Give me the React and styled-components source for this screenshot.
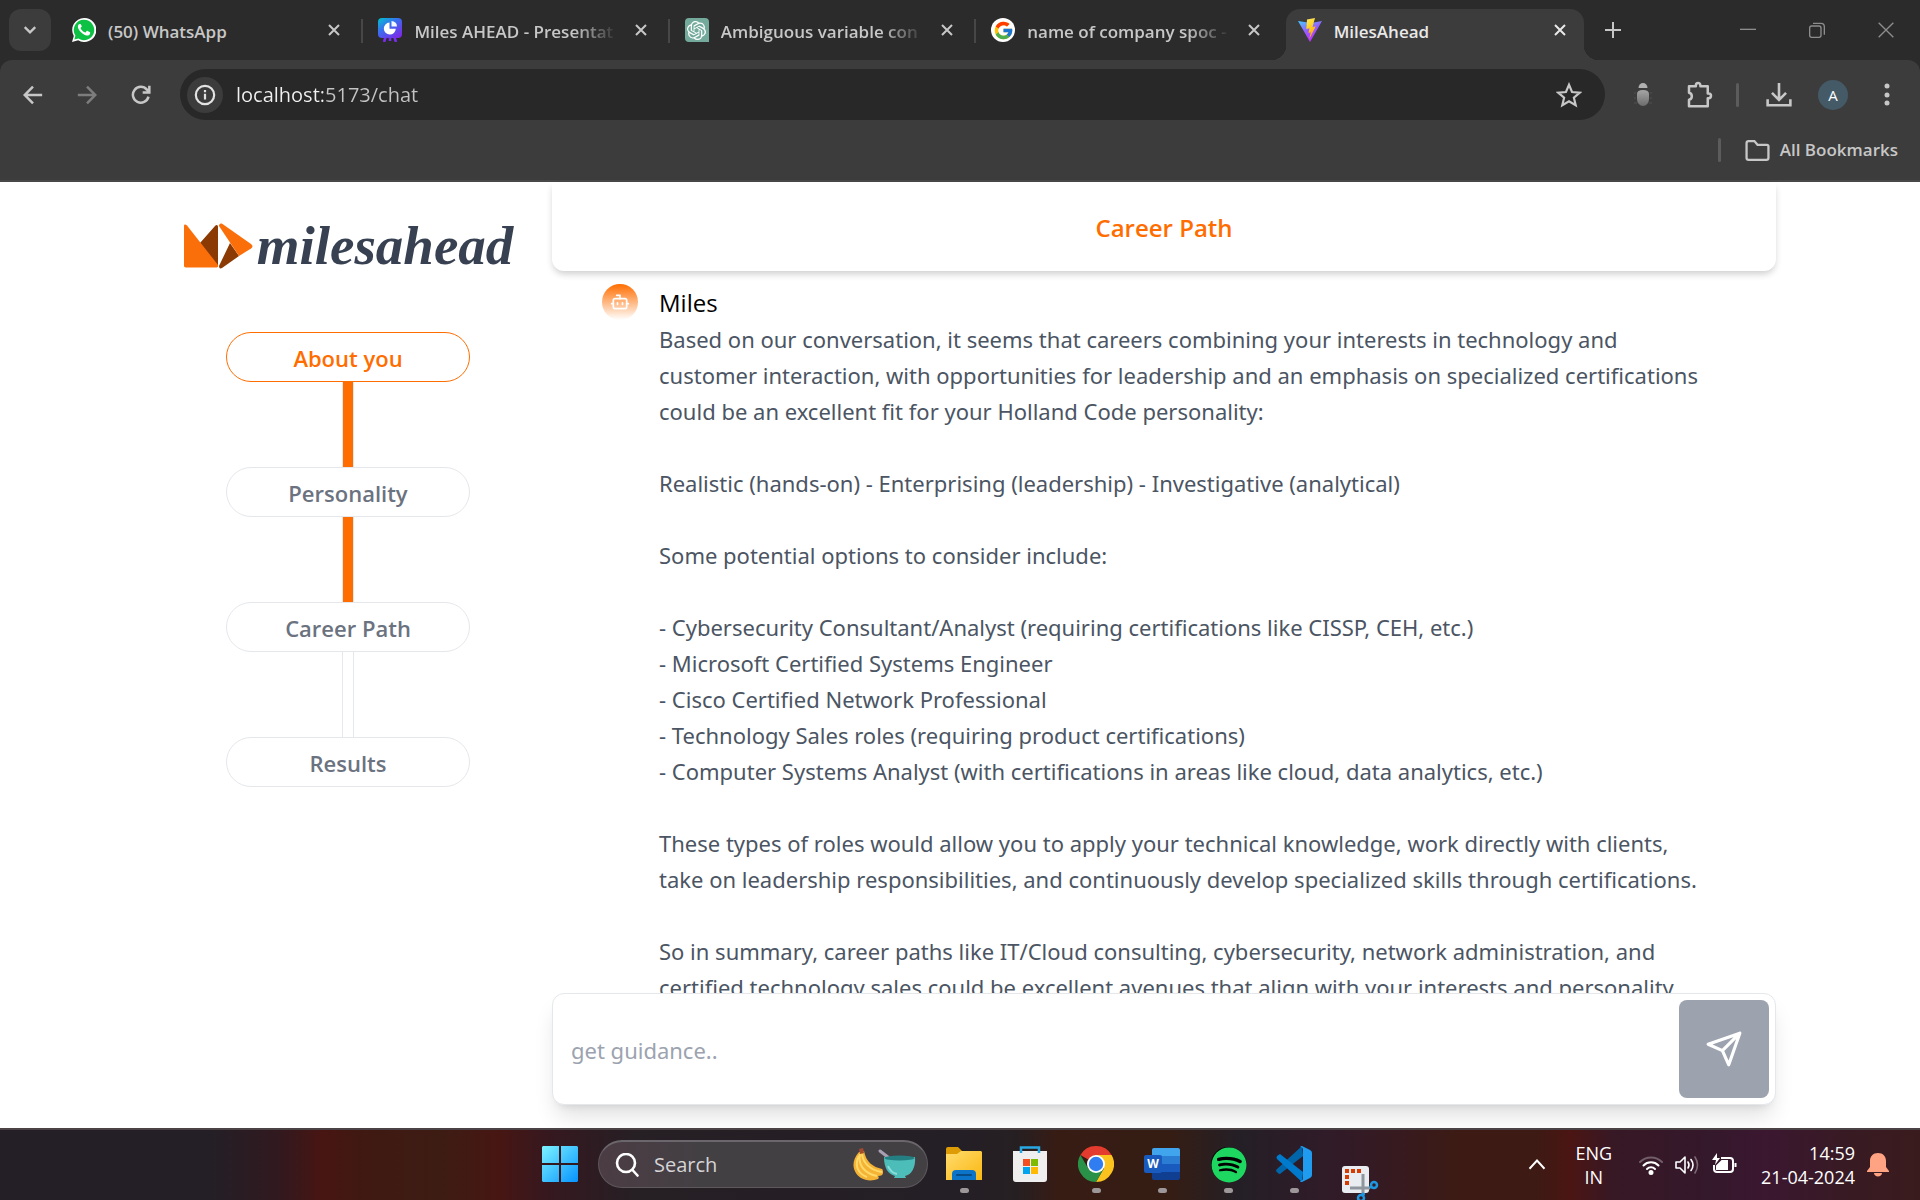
import React, { useState } from "react";
import styled, { createGlobalStyle, css } from "styled-components";
import { FcGoogle } from "react-icons/fc";
import { SiOpenai } from "react-icons/si";
import { FaSpotify } from "react-icons/fa";

const UI = `"Open Sans", "Noto Sans", sans-serif`;
const TEXT = `"Noto Sans", "Open Sans", sans-serif`;
const ORANGE = "#ff6d00";

const GlobalStyle = createGlobalStyle`
  * { box-sizing: border-box; }
  body { margin: 0; background: #fff; font-family: ${UI}; }
  button, input { font-family: inherit; }
  button { border: 0; padding: 0; background: none; color: inherit; cursor: pointer; }
  input { border: 0; outline: 0; background: none; min-width: 0; }
  svg { display: block; flex: none; }
`;

const Screen = styled.div`
  display: flex;
  flex-direction: column;
  height: 100vh;
  overflow: hidden;
`;

/* ---------- browser frame ---------- */

const BrowserFrame = styled.header`
  flex: none;
  background: #2b2b2b;
  color: #c7c7c7;
`;

const TabStrip = styled.div`
  display: flex;
  align-items: center;
  height: 60px;
  padding: 0 0 0 9px;
`;

const TabSearch = styled.button`
  display: grid;
  place-items: center;
  width: 42px;
  height: 42px;
  border-radius: 12px;
  background: #3c3c3c;
`;

const Tabs = styled.div`
  display: flex;
  align-self: stretch;
  flex: 0 1 1530px;
  min-width: 0;
  margin-left: 9px;
`;

const Tab = styled.div`
  position: relative;
  display: flex;
  align-items: center;
  flex: 1 1 0;
  min-width: 0;
  gap: 12px;
  padding: 0 20px 0 12px;

  ${(p) =>
    p.$divided &&
    css`
      &::after {
        content: "";
        position: absolute;
        right: 3px;
        top: 19px;
        width: 2px;
        height: 24px;
        background: #474747;
      }
    `}

  ${(p) =>
    p.$active &&
    css`
      margin: 9px 6px 0 0;
      padding: 0 12px 9px 12px;
      background: #3c3c3c;
      border-radius: 14px 14px 0 0;
      color: #e9e9e9;

      &::before,
      &::after {
        content: "";
        position: absolute;
        bottom: 0;
        width: 14px;
        height: 14px;
      }
      &::before {
        left: -14px;
        background: radial-gradient(circle at 0 0, transparent 14px, #3c3c3c 14px);
      }
      &::after {
        right: -14px;
        background: radial-gradient(circle at 100% 0, transparent 14px, #3c3c3c 14px);
      }
    `}
`;

const TabTitle = styled.span`
  flex: 1;
  min-width: 0;
  padding-top: 3px;
  white-space: nowrap;
  font-size: 17px;
  line-height: 24px;
  font-weight: 600;
  ${(p) => p.$fade && css`mask-image: linear-gradient(to right, #000 160px, transparent 204px);`}
`;

const IconButton = styled.button`
  display: grid;
  place-items: center;
  flex: none;
  width: ${(p) => p.$w || 36}px;
  height: 36px;
  color: ${(p) => p.$color || "inherit"};
`;

const WindowButtons = styled.div`
  display: flex;
  margin-left: auto;
  color: #8d8d8d;
`;

const Toolbar = styled.div`
  display: flex;
  align-items: center;
  height: 69px;
  padding: 0 11px 0 6px;
  background: #3c3c3c;
  border-radius: 12px 12px 0 0;
`;

const NavButtons = styled.div`
  display: flex;
  flex: none;
  width: 174px;
`;

const AddressBar = styled.div`
  display: flex;
  align-items: center;
  flex: 1;
  height: 51px;
  padding: 0 18px 0 7px;
  border-radius: 26px;
  background: #282828;
`;

const SiteInfo = styled.button`
  display: grid;
  place-items: center;
  width: 36px;
  height: 36px;
  border-radius: 50%;
  background: #3c3c3c;
  color: #e3e3e3;
`;

const AddressInput = styled.input`
  flex: 1;
  margin-left: 13px;
  padding: 0;
  font-size: 20px;
  line-height: 28px;
  color: transparent;
  background: linear-gradient(to right, #f1f1f1 87px, #c4c4c4 87px);
  background-clip: text;
`;

const ToolbarActions = styled.div`
  display: flex;
  align-items: center;
  flex: none;
`;

const Divider = styled.span`
  width: 3px;
  height: 24px;
  border-radius: 2px;
  background: #5c5c5c;
`;

const Profile = styled.button`
  width: 30px;
  height: 30px;
  border-radius: 50%;
  background: #455a67;
  color: #fff;
  font-size: 15px;
  line-height: 30px;
`;

const Bookmarks = styled.div`
  display: flex;
  align-items: center;
  justify-content: flex-end;
  gap: 24px;
  height: 53px;
  padding: 0 22px 9px 0;
  background: #3c3c3c;
  border-bottom: 2px solid #484848;
`;

const BookmarkButton = styled.button`
  display: flex;
  align-items: center;
  gap: 10px;
  font-size: 17px;
  line-height: 24px;
  font-weight: 600;
`;

/* ---------- page ---------- */

const Page = styled.main`
  display: grid;
  grid-template-columns: 1fr 3fr;
  flex: 1;
  min-height: 0;
  width: 85%;
  margin: 0 auto;
`;

const Sidebar = styled.aside`
  display: flex;
  flex-direction: column;
  align-items: center;
  padding-top: 40px;
`;

const Brand = styled.h1`
  display: flex;
  align-items: center;
  gap: 4px;
  height: 48px;
  margin: 0 0 62px;
  font-family: "Liberation Serif", "Times New Roman", serif;
  font-size: 55px;
  line-height: 48px;
  font-style: italic;
  font-weight: 700;
  color: #374151;
`;

const Steps = styled.ol`
  display: flex;
  flex-direction: column;
  margin: 0;
  padding: 0;
  list-style: none;
`;

const Step = styled.li`
  display: flex;
  flex-direction: column;
  align-items: center;
`;

const StepButton = styled.button`
  width: 244px;
  height: 50px;
  padding-top: 2px;
  border: 1px solid ${(p) => (p.$current ? ORANGE : "#e5e7eb")};
  border-radius: 25px;
  color: ${(p) => (p.$current ? ORANGE : "#6b7280")};
  background: #fff;
  font-size: 22px;
  line-height: 36px;
  font-weight: 600;
`;

const Connector = styled.span`
  width: 12px;
  height: 85px;
  border: solid #e5e7eb;
  border-width: 0 1px;
  background: ${(p) => (p.$done ? ORANGE : "#fff")};
`;

const Chat = styled.section`
  display: flex;
  flex-direction: column;
  min-width: 0;
  min-height: 0;
  padding-bottom: 23px;
`;

const ChatHeader = styled.h2`
  position: relative;
  z-index: 1;
  flex: none;
  margin: 0;
  padding: 28px 0 25px;
  border-radius: 0 0 12px 12px;
  background: #fff;
  box-shadow: 0 4px 6px -1px rgba(0, 0, 0, 0.1), 0 4px 10px -2px rgba(0, 0, 0, 0.12);
  color: ${ORANGE};
  text-align: center;
  font-size: 24px;
  line-height: 36px;
  font-weight: 600;
`;

const Messages = styled.div`
  flex: 1;
  min-height: 0;
  overflow: hidden;
  padding: 13px 50px 0;
`;

const Message = styled.article`
  display: flex;
  gap: 21px;
`;

const Avatar = styled.span`
  display: grid;
  place-items: center;
  flex: none;
  width: 36px;
  height: 36px;
  border-radius: 50%;
  background: linear-gradient(${ORANGE}, #fff);
  color: #fff;
`;

const MessageBody = styled.div`
  min-width: 0;
  padding-top: 1px;
  color: #4b5563;
  font-family: ${TEXT};
  font-size: 22px;
  line-height: 36px;
`;

const Author = styled.h3`
  margin: 0;
  font-family: ${UI};
  font-size: 24px;
  line-height: 36px;
  font-weight: 500;
  color: #000;
`;

const MessageText = styled.p`
  margin: 0 0 36px;
  white-space: pre;
`;

const Composer = styled.form`
  display: flex;
  flex: none;
  height: 112px;
  padding: 6px;
  border: 1px solid #e5e7eb;
  border-radius: 12px;
  background: #fff;
  box-shadow: 0 15px 22px -4px rgba(0, 0, 0, 0.12), 0 6px 9px -6px rgba(0, 0, 0, 0.12);
`;

const Prompt = styled.input`
  flex: 1;
  padding: 2px 12px 0;
  font-family: ${TEXT};
  font-size: 22px;
  line-height: 36px;
  color: #374151;
  &::placeholder {
    color: #9ca3af;
    opacity: 1;
  }
`;

const SendButton = styled.button`
  display: grid;
  place-items: center;
  width: 90px;
  border-radius: 8px;
  background: #9ca3af;
  color: #fff;
`;

/* ---------- taskbar ---------- */

const Taskbar = styled.footer`
  display: grid;
  grid-template-columns: 1fr auto 1fr;
  flex: none;
  height: 72px;
  border-top: 2px solid #4b4245;
  color: #fff;
  background: linear-gradient(
    to right,
    #241f26 0%, #241f26 11%, #31191f 14.5%, #481512 16.8%, #3f1912 19%, #3d1c14 23%,
    #471613 26%, #36181f 28.5%, #261f24 33%, #241f26 50%, #261f22 53%, #371c14 55%,
    #351d14 61%, #241f26 64.5%, #301b29 69%, #371a1f 73%, #3d1b14 76%, #3d1a14 80%,
    #4b1513 81.8%, #371825 84%, #34182b 89%, #3b1730 92%, #381a24 96%, #3a1b1d 100%
  );
`;

const TaskbarApps = styled.nav`
  grid-column: 2;
  display: flex;
  align-items: center;
`;

const AppButton = styled.button`
  position: relative;
  display: grid;
  place-items: center;
  width: 66px;
  height: 70px;
  padding-bottom: 2px;
  ${(p) =>
    p.$running &&
    css`
      &::after {
        content: "";
        position: absolute;
        left: 29px;
        bottom: 7px;
        width: 9px;
        height: 5px;
        border-radius: 3px;
        background: #9d9799;
      }
    `}
`;

const SnipSlot = styled(AppButton)`
  align-items: end;
  padding-bottom: 0;
`;

const TaskSearch = styled.label`
  display: flex;
  align-items: center;
  width: 330px;
  height: 48px;
  margin: 0 3px 2px 5px;
  padding: 0 11px 0 16px;
  border: 1px solid #5d585c;
  border-top: 2px solid #6b666b;
  border-radius: 24px;
  background: linear-gradient(to right, #4c3c44, #434044 30%);
`;

const TaskSearchInput = styled.input`
  flex: 1;
  width: 100px;
  padding: 0 0 0 15px;
  font-size: 20px;
  line-height: 28px;
  color: #fff;
  &::placeholder {
    color: #d6d4d6;
    opacity: 1;
  }
`;

const Tray = styled.div`
  grid-column: 3;
  display: flex;
  align-items: center;
  justify-content: flex-end;
  padding-right: 31px;
`;

const HiddenIcons = styled(IconButton)`
  margin-right: 20px;
`;

const TrayText = styled.button`
  margin-right: ${(p) => p.$gap}px;
  padding-bottom: 1px;
  text-align: ${(p) => p.$align};
  font-size: 18px;
  line-height: 24px;
`;

const TrayIcons = styled.div`
  display: flex;
  align-items: center;
  gap: 12px;
  margin-right: 24px;
`;

/* ---------- icons ---------- */

const Stroke = ({ size = 24, w = 2, children, ...rest }) => (
  <svg width={size} height={size} viewBox="0 0 24 24" fill="none" stroke="currentColor" strokeWidth={w} aria-hidden="true" {...rest}>
    {children}
  </svg>
);

const CloseIcon = () => (
  <Stroke size={12} w={4}><path d="M2 2l20 20M22 2L2 22" /></Stroke>
);

const WhatsAppLogo = () => (
  <svg width="24" height="24" viewBox="0 0 24 24" aria-hidden="true">
    <path d="M12 0a12 12 0 0 0-10.200 18L0 24l6.200-1.700A12 12 0 1 0 12 0z" fill="#fff" />
    <path d="M12 1.800A10.200 10.200 0 0 0 3.400 17.500L2.400 21.500l4-1A10.200 10.200 0 1 0 12 1.800z" fill="#0cc143" />
    <path d="M8.900 6.500c-.3-.6-.6-.6-1-.6-1.200 0-2 1.300-2 2.600 0 3.600 5.400 9 9 9 1.800 0 3.300-1 3.300-2.600 0-.6-.1-.8-.6-1l-2-1c-.5-.2-.8-.1-1.100.3l-.8 1c-.3.3-.6.300-1 .1-1.600-.7-3.200-2.200-4-3.800-.2-.4-.1-.6.1-.9l.8-.9c.2-.3.200-.5.100-.8z" fill="#fff" />
  </svg>
);

const SlidesLogo = () => (
  <svg width="24" height="24" viewBox="0 0 24 24" aria-hidden="true">
    <defs>
      <linearGradient id="slides" x1="0" y1="0" x2="0.8" y2="1">
        <stop offset="0" stopColor="#00c4cc" />
        <stop offset="0.45" stopColor="#3a6df0" />
        <stop offset="1" stopColor="#7d2ae8" />
      </linearGradient>
    </defs>
    <path d="M8 18l-2 6M16 18l2 6M12 19v4" stroke="#7a2df0" strokeWidth="2.600" />
    <rect width="24" height="20" rx="4" fill="url(#slides)" />
    <path d="M11.500 4.500v6.300h6.300a6 6 0 1 1-6.300-6.300z" fill="#fff" />
    <path d="M13.500 3a5.500 5.500 0 0 1 5.500 5.500h-5.500z" fill="#fff" opacity="0.950" />
  </svg>
);

const ChatGptBadge = styled.span`
  display: grid;
  place-items: center;
  flex: none;
  width: 24px;
  height: 24px;
  border-radius: 4px 4px 0 4px;
  background: #74aa9c;
  color: #fff;
`;

const GoogleBadge = styled(ChatGptBadge)`
  border-radius: 50%;
  background: #fff;
`;

const ViteLogo = () => (
  <svg width="24" height="24" viewBox="0 0 24 24" aria-hidden="true">
    <defs>
      <linearGradient id="vite" x1="0" y1="0" x2="0.500" y2="1">
        <stop offset="0" stopColor="#41d1ff" />
        <stop offset="0.500" stopColor="#9461fd" />
        <stop offset="1" stopColor="#c02fff" />
      </linearGradient>
      <linearGradient id="bolt" x1="0" y1="0" x2="0.300" y2="1">
        <stop offset="0" stopColor="#ffea83" />
        <stop offset="0.300" stopColor="#ffdd35" />
        <stop offset="1" stopColor="#ffa800" />
      </linearGradient>
    </defs>
    <path d="M0 3l12 21L24 3l-11 2z" fill="url(#vite)" />
    <path d="M17 0L9 1.500 8.300 11l3.200-.7-1 4.700 2.300-.7-1.500 6.700L17.700 8.500l-3.200.6z" fill="url(#bolt)" />
  </svg>
);

const BugIcon = () => (
  <svg width="22" height="26" viewBox="0 0 22 26" aria-hidden="true">
    <defs>
      <linearGradient id="bug" x1="0" y1="0" x2="0" y2="1">
        <stop offset="0" stopColor="#a5a5a5" /><stop offset="1" stopColor="#6c6c6c" />
      </linearGradient>
    </defs>
    <path d="M6.500 6a4.500 5 0 0 1 9 0z" fill="#b0b0b0" />
    <path d="M5 12q0-4 6-4t6 4v5a6 7 0 0 1-12 0z" fill="url(#bug)" />
    <path d="M2 11h2M18 11h2M2 16h2M18 16h2M2 21h3M17 21h3" stroke="#505050" strokeWidth="1" />
  </svg>
);

const PuzzleIcon = () => (
  <Stroke size={30} w={2}>
    <path d="M4 5h5.500V4.200a1.800 1.800 0 0 1 3.600 0V5H19v5.700h.7a1.900 1.900 0 0 1 0 3.800H19V21H4v-5.200c3-.5 3-5 0-5.600z" strokeLinejoin="round" />
  </Stroke>
);

const BrandMark = () => (
  <svg width="70" height="46" viewBox="0 0 70 46" aria-hidden="true">
    <path d="M32 3c1.500-2 3-1 3 1v40L17 20z" fill="#8b3a03" />
    <path d="M1 3c0-2 1.500-2 3-.500L35 42c.5 1.500 0 2.500-1.500 2.500H3c-1.500 0-2-.7-2-2z" fill="#fb6f0b" />
    <path d="M47 20l9 13-17 12c-2 1-3 0-3-2z" fill="#8b3a03" />
    <path d="M36 3c0-2 1.500-3 3.500-2L68 21c2 1.500 2 3 0 4.500L56 33z" fill="#fb6f0b" />
  </svg>
);

const WindowsLogo = () => (
  <svg width="36" height="36" viewBox="0 0 36 36" aria-hidden="true">
    <defs>
      <linearGradient id="win" x1="0" y1="0" x2="1" y2="1">
        <stop offset="0" stopColor="#7df3ff" /><stop offset="1" stopColor="#0693ff" />
      </linearGradient>
    </defs>
    <path d="M1 0h16v17H0V1zM19 0h16l1 1v16H19zM0 19h17v17H1l-1-1zM19 19h17v16l-1 1H19z" fill="url(#win)" />
  </svg>
);

const BananaBowl = () => (
  <svg width="64" height="34" viewBox="0 0 64 34" aria-hidden="true">
    <path d="M7 4C-2 14 1 25 9 30c5 3 12 3 17 1 1-1 1-2 0-3 3 0 5-1 5-3s0-3-1-4C21 19 14 14 12 3z" fill="#f5b335" />
    <path d="M8 6c-2 10 3 19 17 22M10 6c1 9 8 16 20 18M7 8C2 17 6 26 15 29" fill="none" stroke="#ffd968" strokeWidth="2" />
    <path d="M7 1l4-1 1 5-4 1z" fill="#a54a2d" />
    <path d="M28 3l13 10" stroke="#a9a0b5" strokeWidth="3" strokeLinecap="round" />
    <path d="M32 9h31c1 11-4 18-10 19l1 2H42l1-2c-7-2-11-8-11-19z" fill="#4dbdba" />
    <ellipse cx="47.500" cy="10" rx="15" ry="2.500" fill="#237f82" />
    <path d="M36 18c2 5 5 7 9 8" fill="none" stroke="#8ce0dc" strokeWidth="2" />
  </svg>
);

const FolderLogo = () => (
  <svg width="36" height="34" viewBox="0 0 36 34" aria-hidden="true">
    <defs>
      <linearGradient id="folder" x1="0" y1="0" x2="1" y2="1">
        <stop offset="0" stopColor="#ffdc6e" /><stop offset="1" stopColor="#fbb711" />
      </linearGradient>
    </defs>
    <path d="M0 2a2 2 0 0 1 2-2h10l4 4v4H0z" fill="#dd9c06" />
    <path d="M0 7h11l4-3h20l1 1v28H0z" fill="url(#folder)" />
    <path d="M6 33v-6a4 4 0 0 1 4-4h16a4 4 0 0 1 4 4v6z" fill="#0b74c8" />
    <path d="M11 28h14" stroke="#084c87" strokeWidth="2" strokeLinecap="round" />
  </svg>
);

const StoreLogo = () => (
  <svg width="36" height="36" viewBox="0 0 36 36" aria-hidden="true">
    <path d="M1 5h34v28q0 3-3 3H4q-3 0-3-3z" fill="#efefef" />
    <path d="M9 7V1.500h18V7" fill="none" stroke="#29a9e4" strokeWidth="2.500" />
    <path d="M11 13h7v7h-7z" fill="#f25022" /><path d="M19 13h7v7h-7z" fill="#7fba00" />
    <path d="M11 21h7v7h-7z" fill="#00a4ef" /><path d="M19 21h7v7h-7z" fill="#ffb900" />
  </svg>
);

const ChromeLogo = () => (
  <svg width="36" height="36" viewBox="0 0 36 36" aria-hidden="true">
    <path d="M18 18L2.410 9A18 18 0 0 1 33.590 9z" fill="#e33b2e" />
    <path d="M18 9h15.590A18 18 0 0 1 18 36l7.790-13.500z" fill="#fcc31e" />
    <path d="M2.410 9A18 18 0 0 0 18 36l7.790-13.500L18 24l-7.790-1.500z" fill="#2a9148" />
    <circle cx="18" cy="18" r="9" fill="#fff" />
    <circle cx="18" cy="18" r="7.200" fill="#2f7df0" />
  </svg>
);

const WordLogo = () => (
  <svg width="36" height="32" viewBox="0 0 36 32" aria-hidden="true">
    <path d="M10 0h24q2 0 2 2v6H8V2q0-2 2-2z" fill="#41a5ee" />
    <path d="M8 8h28v8H8z" fill="#2b7cd3" />
    <path d="M8 16h28v8H8z" fill="#185abd" />
    <path d="M8 24h28v6q0 2-2 2H10q-2 0-2-2z" fill="#103f91" />
    <rect y="7" width="18" height="18" rx="2" fill="#185abd" />
    <text x="9" y="20" textAnchor="middle" fill="#fff" fontFamily="Open Sans, sans-serif" fontSize="12" fontWeight="700">W</text>
  </svg>
);

const SpotifyDisc = styled.span`
  display: grid;
  place-items: center;
  width: 34px;
  height: 34px;
  border-radius: 50%;
  background: #000;
  color: #1ed760;
`;

const CodeLogo = () => (
  <svg width="36" height="36" viewBox="0 0 36 36" aria-hidden="true">
    <path d="M26 0l1 10L4 28q-2 0-3-2-2-1 0-3z" fill="#0065a9" />
    <path d="M1 10l3-2 23 18-1 10L1 13q-1-2 0-3z" fill="#007acc" />
    <path d="M26 0l8 4q2 1 2 3v22q0 2-2 3l-8 4q-2 0-2-1 3 0 3-3V4q0-3-3-3 1-1 2-1z" fill="#1f9cf0" />
  </svg>
);

const SnipLogo = () => (
  <svg width="37" height="34" viewBox="0 0 37 34" aria-hidden="true">
    <rect x="0" y="0" width="27" height="27" rx="3" fill="#e9edf1" />
    <path d="M3 5h16" fill="none" stroke="#d83b01" strokeWidth="4" strokeDasharray="4 2" />
    <path d="M5 9v11" fill="none" stroke="#d83b01" strokeWidth="4" strokeDasharray="4 2" />
    <path d="M21 8v21M8 22h20" stroke="#8f969d" strokeWidth="3" />
    <circle cx="32" cy="19" r="3" fill="none" stroke="#1c97e0" strokeWidth="2.500" />
    <circle cx="19" cy="32" r="3" fill="none" stroke="#1c97e0" strokeWidth="2.500" />
    <path d="M28 22l2-2M21 29l1-2" stroke="#1c97e0" strokeWidth="3" />
  </svg>
);

const WifiIcon = () => (
  <svg width="24" height="24" viewBox="0 0 24 24" fill="none" stroke="#fff" strokeWidth="2" strokeLinecap="round" aria-hidden="true">
    <path d="M1 9a15.500 15.500 0 0 1 22 0" opacity="0.300" />
    <path d="M4.500 12.500a10.500 10.500 0 0 1 15 0M8 16a5.700 5.700 0 0 1 8 0" />
    <circle cx="12" cy="19.500" r="1.500" fill="#fff" />
  </svg>
);

const SpeakerIcon = () => (
  <svg width="25" height="24" viewBox="0 0 25 24" fill="none" stroke="#fff" strokeWidth="1.600" strokeLinecap="round" strokeLinejoin="round" aria-hidden="true">
    <path d="M1 9h4l5-5v16l-5-5H1zM13 9q2 3 0 6M16 6.500q4 5.500 0 11" />
    <path d="M20 4q5 8 0 16" opacity="0.350" />
  </svg>
);

const BatteryIcon = () => (
  <svg width="25" height="24" viewBox="0 0 25 24" fill="none" stroke="#fff" strokeWidth="2" aria-hidden="true">
    <path d="M9 5h9q3 0 3 3v8q0 3-3 3H5q-3 0-3-3v-4" />
    <path d="M23.500 10v4" />
    <path d="M10 8h5v8H5v-3z" fill="#fff" />
    <path d="M5 0L0 7h4l-1 5 5-7H5z" fill="#fff" stroke="none" />
  </svg>
);

const BellIcon = () => (
  <svg width="22" height="24" viewBox="0 0 22 24" fill="#ffa382" aria-hidden="true">
    <path d="M11 0c5 0 8 3.500 8 8v6l3 4v1H0v-1l3-4V8c0-4.500 3-8 8-8zM7 20h8c0 2-2 3.500-4 3.500S7 22 7 20z" />
  </svg>
);

/* ---------- data ---------- */

const TABS = [
  { title: "(50) WhatsApp", icon: <WhatsAppLogo />, divided: true },
  { title: "Miles AHEAD - Presentat", icon: <SlidesLogo />, divided: true, fade: true },
  { title: "Ambiguous variable con", icon: <ChatGptBadge><SiOpenai size={19} /></ChatGptBadge>, divided: true, fade: true },
  { title: "name of company spoc -", icon: <GoogleBadge><FcGoogle size={21} /></GoogleBadge>, fade: true },
  { title: "MilesAhead", icon: <ViteLogo />, active: true },
];

const STEPS = [
  { label: "About you", current: true, done: true },
  { label: "Personality", done: true },
  { label: "Career Path" },
  { label: "Results" },
];

const REPLY = [
  `Based on our conversation, it seems that careers combining your interests in technology and
customer interaction, with opportunities for leadership and an emphasis on specialized certifications
could be an excellent fit for your Holland Code personality:`,
  `Realistic (hands-on) - Enterprising (leadership) - Investigative (analytical)`,
  `Some potential options to consider include:`,
  `- Cybersecurity Consultant/Analyst (requiring certifications like CISSP, CEH, etc.)
- Microsoft Certified Systems Engineer
- Cisco Certified Network Professional
- Technology Sales roles (requiring product certifications)
- Computer Systems Analyst (with certifications in areas like cloud, data analytics, etc.)`,
  `These types of roles would allow you to apply your technical knowledge, work directly with clients,
take on leadership responsibilities, and continuously develop specialized skills through certifications.`,
  `So in summary, career paths like IT/Cloud consulting, cybersecurity, network administration, and
certified technology sales could be excellent avenues that align with your interests and personality`,
];

const APPS = [
  { name: "File Explorer", icon: <FolderLogo />, running: true },
  { name: "Microsoft Store", icon: <StoreLogo /> },
  { name: "Chrome", icon: <ChromeLogo />, running: true },
  { name: "Word", icon: <WordLogo />, running: true },
  { name: "Spotify", icon: <SpotifyDisc><FaSpotify size={36} /></SpotifyDisc>, running: true },
  { name: "Visual Studio Code", icon: <CodeLogo />, running: true },
];

function Browser() {
  return (
    <BrowserFrame>
      <TabStrip>
        <TabSearch aria-label="Search tabs">
          <Stroke size={14} w={4}><path d="M3 7l9 9 9-9" /></Stroke>
        </TabSearch>
        <Tabs>
          {TABS.map((t) => (
            <Tab key={t.title} $active={t.active} $divided={t.divided}>
              {t.icon}
              <TabTitle $fade={t.fade}>{t.title}</TabTitle>
              <IconButton $w={24} aria-label={`Close ${t.title}`}><CloseIcon /></IconButton>
            </Tab>
          ))}
        </Tabs>
        <IconButton $w={46} aria-label="New tab">
          <Stroke size={16} w={3}><path d="M12 0v24M0 12h24" /></Stroke>
        </IconButton>
        <WindowButtons>
          <IconButton $w={69} aria-label="Minimize"><Stroke size={16} w={2}><path d="M0 11h24" /></Stroke></IconButton>
          <IconButton $w={69} aria-label="Restore">
            <Stroke size={16} w={2}><rect x="1" y="6" width="17" height="17" rx="3" /><path d="M6 2h12q5 0 5 5v12" /></Stroke>
          </IconButton>
          <IconButton $w={69} aria-label="Close window"><Stroke size={16} w={2}><path d="M1 1l22 22M23 1L1 23" /></Stroke></IconButton>
        </WindowButtons>
      </TabStrip>
      <Toolbar>
        <NavButtons>
          <IconButton $w={54} aria-label="Back"><Stroke size={20} w={3}><path d="M23 12H3M12 2L2 12l10 10" /></Stroke></IconButton>
          <IconButton $w={54} $color="#7d7d7d" aria-label="Forward"><Stroke size={20} w={3}><path d="M1 12h20M12 2l10 10-10 10" /></Stroke></IconButton>
          <IconButton $w={54} aria-label="Reload">
            <Stroke size={20} w={3}><path d="M21 14a9.500 9.500 0 1 1-2-8.500L22 8M22 1v8h-8" /></Stroke>
          </IconButton>
        </NavButtons>
        <AddressBar>
          <SiteInfo aria-label="Site information">
            <Stroke size={22} w={2.4}><circle cx="12" cy="12" r="10" /><path d="M12 10.500V17M12 6.500V9" /></Stroke>
          </SiteInfo>
          <AddressInput aria-label="Address" defaultValue="localhost:5173/chat" />
          <IconButton aria-label="Bookmark this page">
            <Stroke size={26} w={2}><path d="M12 2.500l2.800 6.700 7.200.6-5.500 4.700 1.700 7-6.200-3.700-6.200 3.700 1.700-7L2 9.800l7.200-.6z" /></Stroke>
          </IconButton>
        </AddressBar>
        <ToolbarActions>
          <IconButton $w={76} aria-label="Extension"><BugIcon /></IconButton>
          <IconButton aria-label="Extensions"><PuzzleIcon /></IconButton>
          <IconButton $w={40} as="span"><Divider /></IconButton>
          <IconButton $w={44} aria-label="Downloads">
            <Stroke size={26} w={2.4}><path d="M12 1v15M5.500 10l6.500 6.500 6.500-6.500M1.500 16v5.500h21V16" /></Stroke>
          </IconButton>
          <IconButton $w={64} as="span"><Profile aria-label="Profile">A</Profile></IconButton>
          <IconButton $w={44} aria-label="Menu">
            <svg width="6" height="26" viewBox="0 0 6 26" fill="currentColor"><circle cx="3" cy="4" r="2.500" /><circle cx="3" cy="13" r="2.500" /><circle cx="3" cy="21" r="2.500" /></svg>
          </IconButton>
        </ToolbarActions>
      </Toolbar>
      <Bookmarks>
        <Divider />
        <BookmarkButton>
          <Stroke size={25} w={2.2}><path d="M1.500 5q0-2 2-2H9l3 3.500h9q1.500 0 1.500 1.500v11q0 2-2 2h-17q-2 0-2-2z" /></Stroke>
          All Bookmarks
        </BookmarkButton>
      </Bookmarks>
    </BrowserFrame>
  );
}

export default function App() {
  const [prompt, setPrompt] = useState("");
  return (
    <Screen>
      <GlobalStyle />
      <Browser />
      <Page>
        <Sidebar>
          <Brand><BrandMark />milesahead</Brand>
          <Steps>
            {STEPS.map((s, i) => (
              <Step key={s.label}>
                <StepButton $current={s.current}>{s.label}</StepButton>
                {i < STEPS.length - 1 && <Connector $done={s.done} />}
              </Step>
            ))}
          </Steps>
        </Sidebar>
        <Chat>
          <ChatHeader>Career Path</ChatHeader>
          <Messages>
            <Message>
              <Avatar>
                <Stroke size={20} w={2} strokeLinecap="round" strokeLinejoin="round">
                  <path d="M12 8V4H8M2 14h2M20 14h2M15 13v2M9 13v2" />
                  <rect width="16" height="12" x="4" y="8" rx="2" />
                </Stroke>
              </Avatar>
              <MessageBody>
                <Author>Miles</Author>
                {REPLY.map((text) => <MessageText key={text}>{text}</MessageText>)}
              </MessageBody>
            </Message>
          </Messages>
          <Composer onSubmit={(e) => e.preventDefault()}>
            <Prompt aria-label="Message" placeholder="get guidance.." value={prompt} onChange={(e) => setPrompt(e.target.value)} />
            <SendButton aria-label="Send">
              <Stroke size={38} w={2} strokeLinejoin="round" strokeLinecap="round">
                <path d="M22 2l-7 20-4-9-9-4zM22 2L11 13" />
              </Stroke>
            </SendButton>
          </Composer>
        </Chat>
      </Page>
      <Taskbar>
        <TaskbarApps>
          <AppButton aria-label="Start"><WindowsLogo /></AppButton>
          <TaskSearch>
            <Stroke size={24} w={2.6} strokeLinecap="round"><circle cx="11" cy="10" r="9" /><path d="M17.500 17l5 5.500" /></Stroke>
            <TaskSearchInput aria-label="Search" placeholder="Search" />
            <BananaBowl />
          </TaskSearch>
          {APPS.map((a) => (
            <AppButton key={a.name} aria-label={a.name} $running={a.running}>{a.icon}</AppButton>
          ))}
          <SnipSlot aria-label="Snipping Tool"><SnipLogo /></SnipSlot>
        </TaskbarApps>
        <Tray>
          <HiddenIcons aria-label="Show hidden icons"><Stroke size={18} w={2.6}><path d="M2 17L12 6l10 11" /></Stroke></HiddenIcons>
          <TrayText $gap={27} $align="center">ENG<br />IN</TrayText>
          <TrayIcons><WifiIcon /><SpeakerIcon /><BatteryIcon /></TrayIcons>
          <TrayText $gap={12} $align="right">14:59<br />21-04-2024</TrayText>
          <BellIcon />
        </Tray>
      </Taskbar>
    </Screen>
  );
}
